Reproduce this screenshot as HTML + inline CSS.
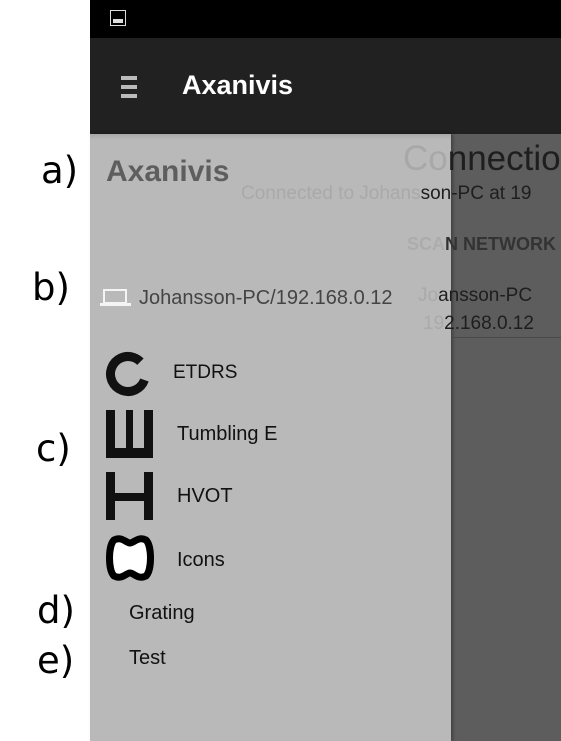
<!DOCTYPE html>
<html><head><style>
body{margin:0;width:561px;height:741px;position:relative;background:#fff;overflow:hidden;font-family:"Liberation Sans",sans-serif}
.a{position:absolute;white-space:nowrap}
.lbl{position:absolute;font-family:"DejaVu Sans",sans-serif;font-size:37px;color:#000;line-height:1}
</style></head><body>
<div class="a" style="left:90px;top:0;width:471px;height:38px;background:#000"></div>
<div class="a" style="left:110px;top:10px;width:16px;height:16px;border:1px solid #ddd;box-sizing:border-box"><div style="position:absolute;left:2px;bottom:2px;width:10px;height:4px;background:#ddd"></div></div>
<div class="a" style="left:90px;top:38px;width:471px;height:96px;background:#212121"></div>
<div class="a" style="left:121px;top:76px;width:16px;height:4px;background:#bbb"></div>
<div class="a" style="left:121px;top:85px;width:16px;height:4px;background:#bbb"></div>
<div class="a" style="left:121px;top:94px;width:16px;height:4px;background:#bbb"></div>
<div class="a" style="left:182px;top:70px;color:#fff;font-size:27px;font-weight:bold">Axanivis</div>
<div class="a" style="left:451px;top:134px;width:110px;height:607px;background:#5d5d5d"></div>
<div class="a" style="left:90px;top:134px;width:361px;height:607px;background:#b9b9b9;box-shadow:2px 0 3px rgba(0,0,0,.3)"></div>
<div class="a" style="left:90px;top:134px;width:361px;height:6px;background:linear-gradient(#a8a8a8,#b9b9b9)"></div>
<div class="a" style="left:403px;top:139px;font-size:35px;color:#a8a8a8">Co<span style="color:#1e1e1e">nnection</span></div>
<div class="a" style="left:241px;top:183px;font-size:19px;color:#a9a9a9">Connected to Johans<span style="color:#1e1e1e">son-PC at 19</span></div>
<div class="a" style="left:407px;top:234px;font-size:18px;font-weight:bold;color:#acacac">SCA<span style="color:#333">N NETWORK</span></div>
<div class="a" style="left:418px;top:285px;font-size:19px;color:#aaa">Jo<span style="color:#1e1e1e">ansson-PC</span></div>
<div class="a" style="left:423px;top:313px;font-size:19px;color:#aaa">19<span style="color:#1e1e1e">2.168.0.12</span></div>
<div class="a" style="left:451px;top:337px;width:110px;height:1px;background:#4a4a4a"></div>
<div class="a" style="left:106px;top:155px;font-size:30px;font-weight:bold;color:#5e5e5e">Axanivis</div>
<svg class="a" style="left:100px;top:288px" width="32" height="20"><rect x="4" y="2" width="22" height="13" fill="none" stroke="#f4f4f4" stroke-width="2"/><rect x="0" y="15" width="31" height="3" fill="#f4f4f4"/></svg>
<div class="a" style="left:139px;top:287px;font-size:20px;color:#444">Johansson-PC/192.168.0.12</div>
<svg class="a" style="left:104px;top:350px" width="50" height="50"><circle cx="24" cy="24" r="17.5" fill="none" stroke="#111" stroke-width="9" stroke-dasharray="90 20" transform="rotate(20 24 24)"/></svg>
<div class="a" style="left:173px;top:362px;font-size:19px;color:#111">ETDRS</div>
<svg class="a" style="left:106px;top:410px" width="50" height="50"><path d="M0 0h9v38h11v-38h7v38h11v-38h9v48h-47z" fill="#111"/></svg>
<div class="a" style="left:177px;top:423px;font-size:20px;color:#111">Tumbling E</div>
<svg class="a" style="left:106px;top:472px" width="50" height="50"><path d="M0 0h9v21h29v-21h9v48h-9v-19h-29v19h-9z" fill="#111"/></svg>
<div class="a" style="left:177px;top:485px;font-size:20px;color:#111">HVOT</div>
<svg class="a" style="left:106px;top:535px" width="50" height="50"><path d="M8 5c8-4 12 3 16 3s8-7 16-3c6 6 6 30 0 36c-8 4-12-3-16-3s-8 7-16 3c-6-6-6-30 0-36z" fill="#fff" stroke="#000" stroke-width="7"/></svg>
<div class="a" style="left:177px;top:549px;font-size:20px;color:#111">Icons</div>
<div class="a" style="left:129px;top:602px;font-size:20px;color:#111">Grating</div>
<div class="a" style="left:129px;top:647px;font-size:20px;color:#111">Test</div>
<div class="lbl" style="left:41px;top:152px">a)</div>
<div class="lbl" style="left:32px;top:269px">b)</div>
<div class="lbl" style="left:36px;top:430px">c)</div>
<div class="lbl" style="left:37px;top:592px">d)</div>
<div class="lbl" style="left:37px;top:642px">e)</div>
</body></html>
